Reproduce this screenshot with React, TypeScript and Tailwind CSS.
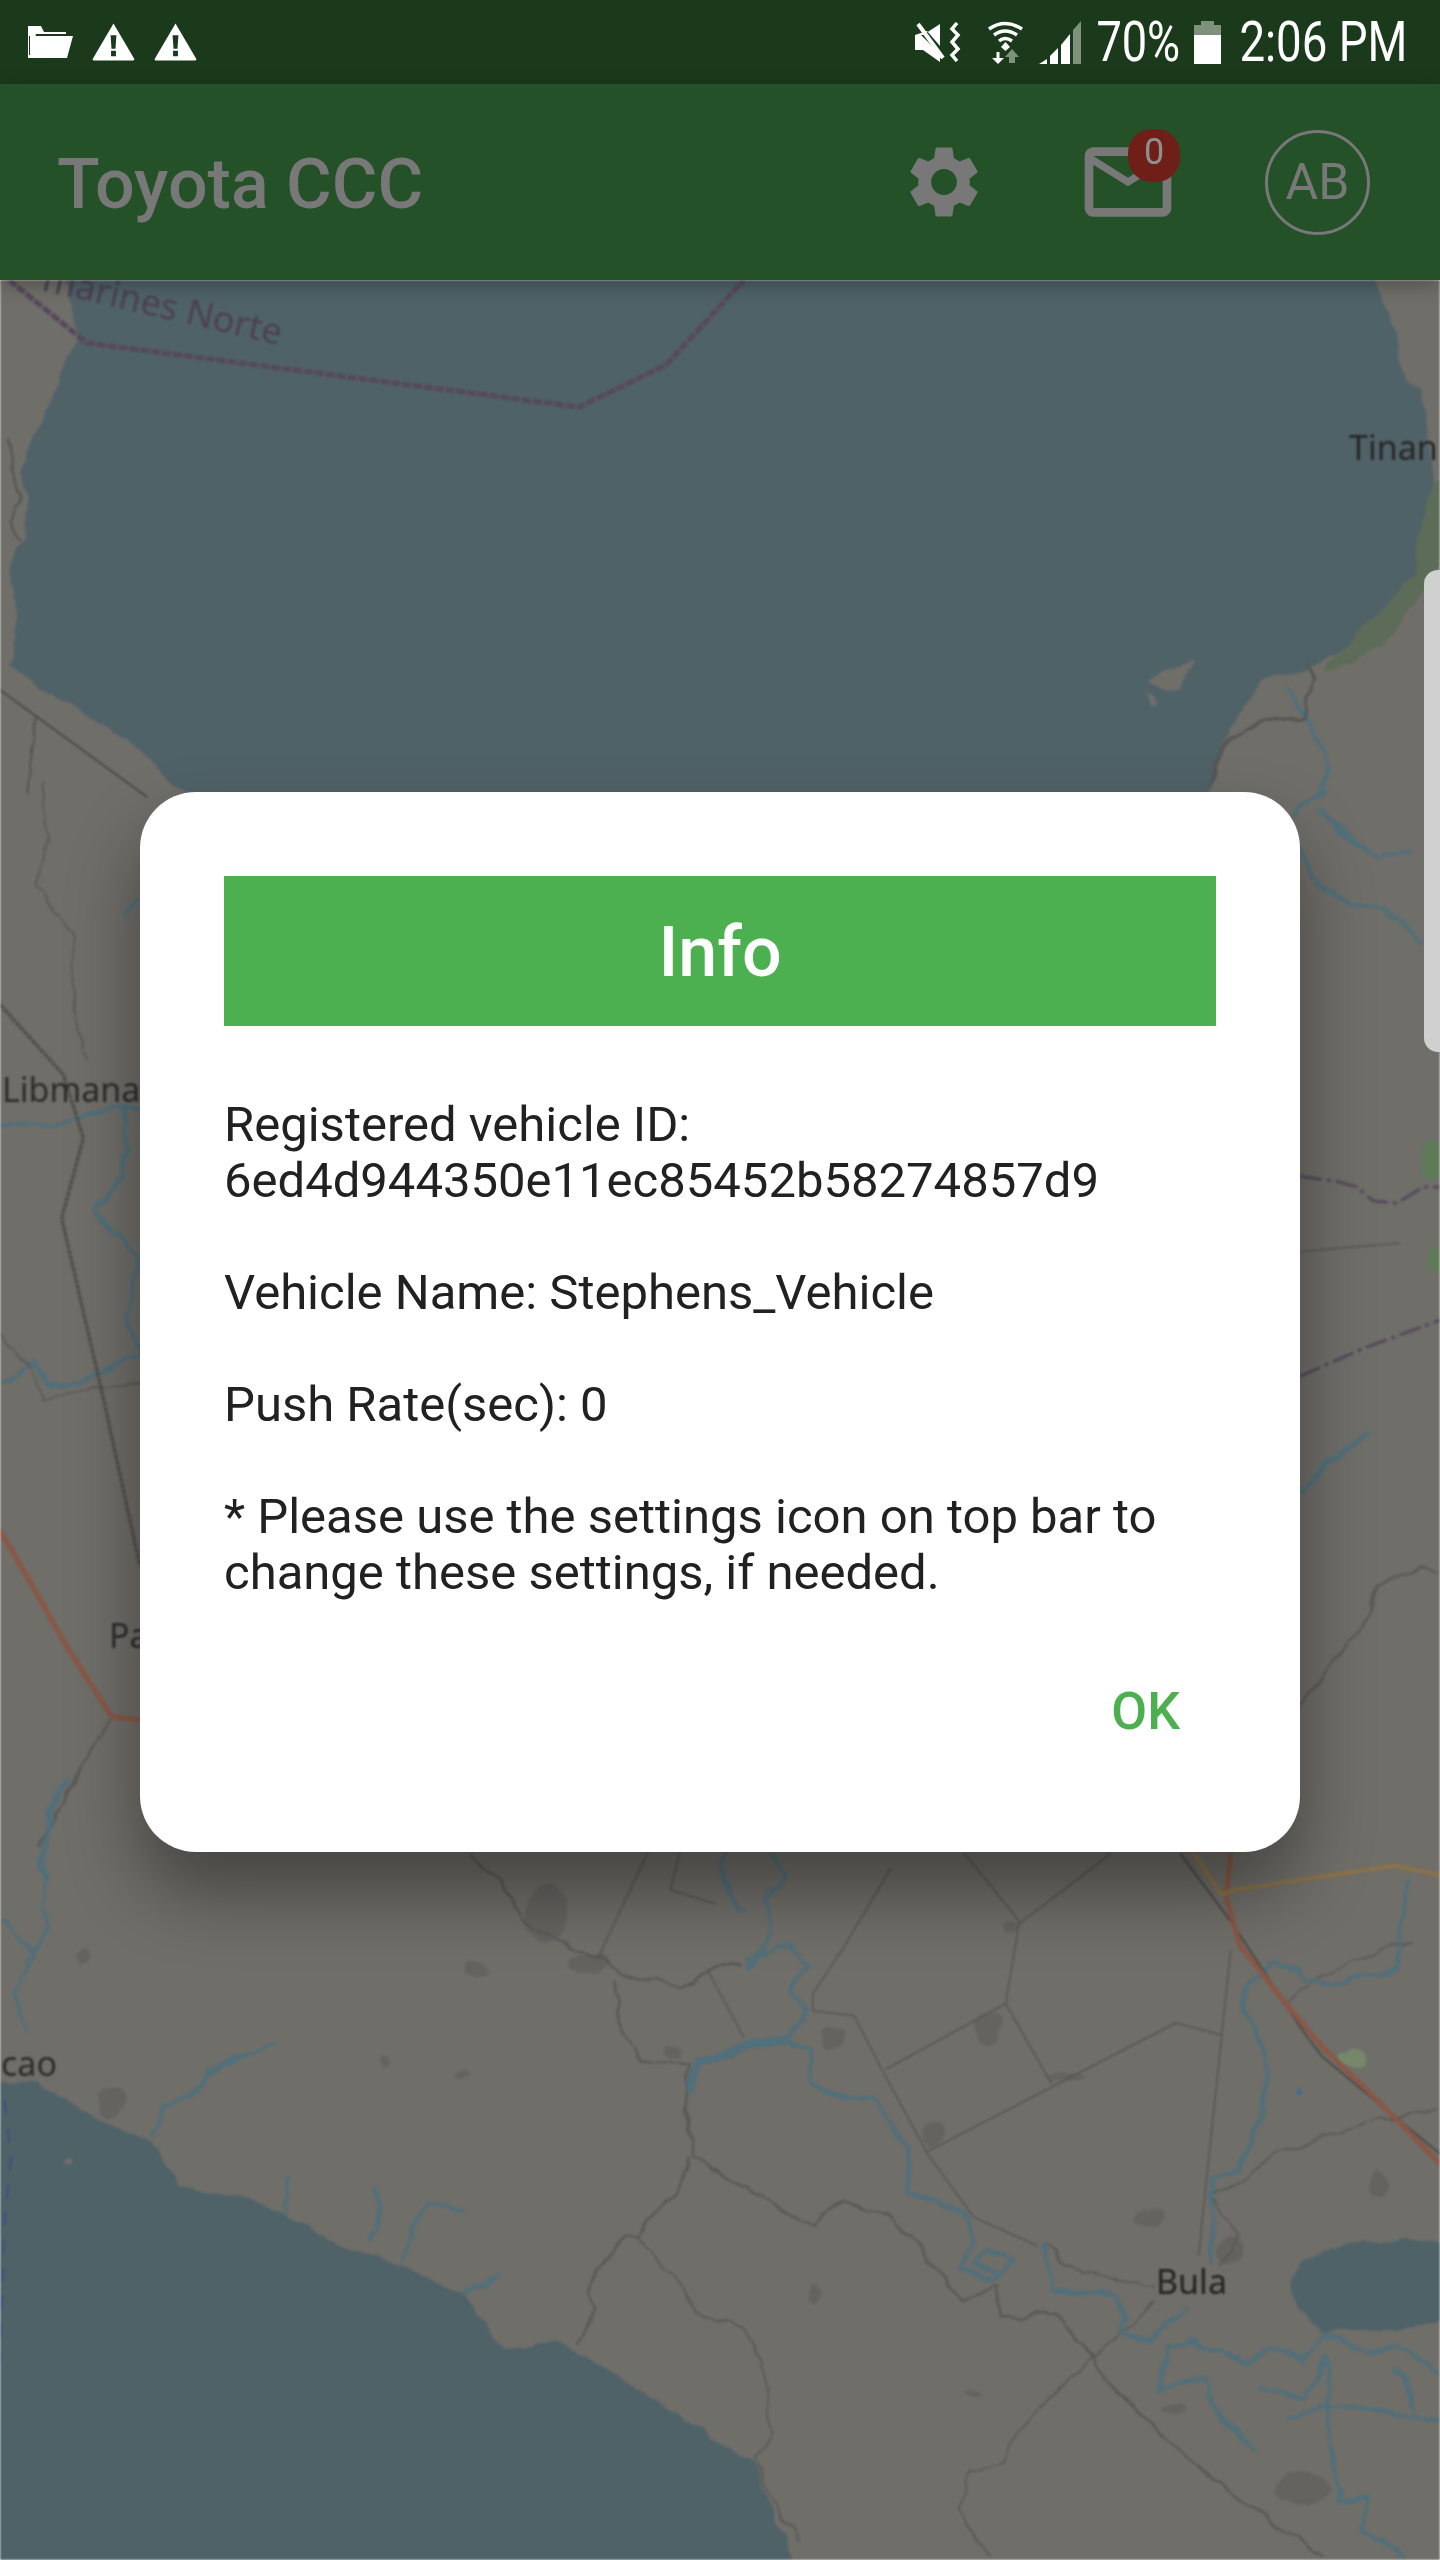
import { MdMailOutline, MdSettings } from "react-icons/md";

// fixed routes stay straight, the rest go through the wobble filter
type Route = { d: string; color: string; w: number; dash?: string; fixed?: boolean };

const ROAD = "#4b4b49";
const THIN = "#555553";
const RIVER = "#4f707c";
const RED = "#8b5744";
const ORANGE = "#8c7248";
const PURPLE = "#57485a";

// top bay and the area around it, in page coordinates
const bayRoutes: Route[] = [
  { d: "M9,280 L87,343 L579,407 L666,365 L744,280", color: PURPLE, w: 5, dash: "9 2", fixed: true },
  { d: "M0,690 L147,797", color: ROAD, w: 2, fixed: true },
  { d: "M37,717 L28,792", color: THIN, w: 2 },
  { d: "M9,437 L18,497 L9,517 L22,540", color: THIN, w: 2 },
  { d: "M1286,687 L1304,713 L1332,770 L1313,800", color: RIVER, w: 4 },
  { d: "M1304,663 L1313,680 L1304,717 L1258,722 L1230,737 L1208,780", color: THIN, w: 3 },
];

// left strip next to the dialog, numbers are crop coordinates
const leftRoutes: Route[] = [
  { d: "M0,320 L190,420 L250,510 L185,625 L300,860 L420,1120", color: ROAD, w: 3, dash: "5 1", fixed: true },
  { d: "M0,1070 L50,1110 L200,1235 L335,1335 L420,1340", color: RED, w: 5, fixed: true },
  { d: "M0,495 L190,490 L250,480 L330,465 L420,470", color: RIVER, w: 4 },
  { d: "M375,470 L370,560 L290,615 L330,640 L410,680 L375,760 L420,820", color: RIVER, w: 4 },
  { d: "M0,860 L100,830 L150,860 L200,860 L290,850 L420,820", color: RIVER, w: 4 },
  { d: "M130,1568 L150,1470 L210,1420", color: RIVER, w: 4 },
  { d: "M380,195 L420,165", color: RIVER, w: 4 },
  { d: "M0,790 L90,835 L130,880 L420,855", color: THIN, w: 1.5 },
  { d: "M130,0 L150,90 L105,150 L215,220 L215,310 L260,400", color: THIN, w: 1.5 },
  { d: "M335,1335 L215,1430 L120,1520", color: THIN, w: 2 },
];

// right strip next to the dialog, crop coordinates
const rightRoutes: Route[] = [
  { d: "M0,50 L100,15 M90,40 L210,95 L270,110 L360,100", color: RIVER, w: 4 },
  { d: "M20,90 L60,140 L110,155 L190,175 L280,180 L400,235", color: RIVER, w: 4 },
  { d: "M30,565 L140,572 L200,580 L250,600 L320,603 L400,580 L450,580", color: PURPLE, w: 3, dash: "22 5 4 5", fixed: true },
  { d: "M30,850 L220,810 L450,770", color: PURPLE, w: 3, dash: "22 5 4 5", fixed: true },
  { d: "M30,672 L330,660", color: THIN, w: 1.5, fixed: true },
  { d: "M30,1020 L100,980 L240,930", color: RIVER, w: 5 },
  { d: "M30,1320 L210,1210 L260,1150 L390,1120 L450,1130", color: THIN, w: 2 },
];

// everything below the dialog, crop coordinates
const bottomRoutes: Route[] = [
  { d: "M510,110 L560,210 L570,250 L640,320 L680,360 L740,385 L770,350 L810,340", color: THIN, w: 2 },
  { d: "M705,110 L650,330", color: THIN, w: 1.5, fixed: true },
  { d: "M740,110 L730,185 L780,215", color: THIN, w: 1.5, fixed: true },
  { d: "M970,140 L920,300 L885,400 L885,435 L930,445 L960,555 L1010,730 L1060,860 L1130,920", color: THIN, w: 1.5, fixed: true },
  { d: "M1050,110 L1110,250 L1095,420 L965,555 M1210,110 L1110,255 M1095,420 L1145,585", color: THIN, w: 1.5, fixed: true },
  { d: "M1010,725 L1280,460 L1330,485", color: THIN, w: 1.5, fixed: true },
  { d: "M770,350 L810,490", color: THIN, w: 1.5, fixed: true },
  { d: "M670,370 L675,480 L700,540 L750,550 L745,630 L755,740 L830,820 L885,875 L915,825 L970,860 L1000,920 L1045,1030 L1085,1000 L1090,1070 L1150,1060 L1190,1150 L1215,1220 L1300,1370 L1440,1560", color: THIN, w: 2 },
  { d: "M750,740 L740,810 L700,870 L695,905 L680,900 L650,970 L640,1020 L650,1050 L630,1120", color: THIN, w: 2 },
  { d: "M695,905 L745,1010 L755,1060 L810,1090 L830,1150 L840,1310 L820,1360 L830,1400 L870,1530", color: THIN, w: 1.5 },
  { d: "M1135,920 L1180,980 L1260,1005 M1260,1035 L1190,1150 L1110,1300 L1095,1370 L1055,1385 L1045,1470 L1075,1568", color: THIN, w: 1.5 },
  { d: "M1340,310 L1305,940", color: THIN, w: 1.5, fixed: true },
  { d: "M1568,640 L1500,660 L1390,730 L1340,800 L1320,820 L1350,900 L1330,960", color: THIN, w: 1.5 },
  { d: "M1540,290 L1520,300 L1450,350 L1400,420", color: THIN, w: 1.5 },
  { d: "M1285,110 L1340,250 L1420,480 L1440,530 L1510,640 L1568,730", color: ROAD, w: 2, fixed: true },
  { d: "M1340,110 L1335,200 L1350,300 L1400,420 L1440,510 L1500,620 L1568,750", color: RED, w: 5, fixed: true },
  { d: "M1300,110 L1330,195 L1345,185 L1520,135 L1568,155", color: ORANGE, w: 4, fixed: true },
  { d: "M790,110 L785,170 L810,230 M840,110 L855,160 L835,200 L840,270 L815,350", color: RIVER, w: 4 },
  { d: "M815,330 L860,300 L880,340 L860,390 L880,440 L855,490 L880,510 L885,580 L905,610 L950,620 L975,680 L990,720 L990,810 L1050,850 L1060,900 L1045,970 L1080,990 L1105,950 L1075,925 L1060,960 L1085,975", color: RIVER, w: 4 },
  { d: "M1135,920 L1145,1010 L1215,1020 L1225,1060 L1220,1090 L1250,1120 L1290,1050", color: RIVER, w: 4 },
  { d: "M855,490 L800,520 L760,545 L750,600", color: RIVER, w: 7 },
  { d: "M0,250 L30,300 L35,330 L15,400 L30,480 M60,0 L45,130 L50,260 L30,340", color: RIVER, w: 3 },
  { d: "M300,505 L240,540 L210,610 L180,630 L165,700", color: RIVER, w: 4 },
  { d: "M315,780 L310,850 M405,795 L415,840 L405,910 M505,850 L465,835 L445,880 L440,950 M540,975 L530,1000 L505,1025", color: RIVER, w: 4 },
  { d: "M1320,960 L1320,790 L1350,760 L1375,640 L1380,520 L1355,430 L1360,380 L1385,340 L1415,350 L1420,370 L1450,385 L1520,350 L1535,165", color: RIVER, w: 4 },
  { d: "M1265,1215 L1270,1130 L1300,1120 L1360,1165 L1380,1130 L1420,1160 L1445,1100 L1490,1140 L1520,1130 L1568,1180", color: RIVER, w: 4 },
  { d: "M1265,1215 L1310,1190 L1330,1280 L1370,1340 M1370,1220 L1420,1230 L1445,1150 L1445,1280 L1460,1450 L1490,1440 L1480,1500 L1530,1560", color: RIVER, w: 4 },
  { d: "M1400,1280 L1440,1250 L1568,1280 M1520,1170 L1540,1260", color: RIVER, w: 4 },
  { d: "M5,620 L12,740 L5,870 L0,1160", color: "#3f4f80", w: 2, dash: "14 14", fixed: true },
];

// built-up patches, faint grey: cx, cy, rx, ry in bottom crop coordinates
const patches = [
  [595, 235, 22, 60], [1075, 470, 14, 30], [905, 490, 14, 22], [1015, 690, 12, 26], [640, 340, 20, 20],
  [120, 625, 18, 30], [90, 320, 9, 16], [735, 520, 8, 16], [520, 350, 12, 22], [1100, 260, 9, 14],
  [890, 1020, 7, 20], [1160, 570, 24, 10], [1420, 1420, 30, 34], [1340, 930, 14, 26], [1250, 860, 16, 20],
  [420, 540, 5, 16], [505, 565, 10, 8], [1500, 790, 10, 26], [1060, 1220, 8, 8], [1280, 1260, 10, 12],
];

function Routes({ routes, fixed }: { routes: Route[]; fixed: boolean }) {
  return (
    <>
      {routes
        .filter((r) => !!r.fixed === fixed)
        .map((r, i) => (
          <path
            key={i}
            d={r.d}
            fill="none"
            stroke={r.color}
            strokeWidth={r.w}
            strokeDasharray={r.dash}
            strokeLinejoin="round"
            vectorEffect="non-scaling-stroke"
          />
        ))}
    </>
  );
}

function RouteLayers({ fixed }: { fixed: boolean }) {
  return (
    <>
      <Routes routes={bayRoutes} fixed={fixed} />
      <g transform="translate(0 780) scale(0.3333 0.7016)">
        <Routes routes={leftRoutes} fixed={fixed} />
      </g>
      <g transform="translate(1290 780) scale(0.3333 0.7016)">
        <Routes routes={rightRoutes} fixed={fixed} />
      </g>
      <g transform="translate(0 1800) scale(0.9184 0.4847)">
        <Routes routes={bottomRoutes} fixed={fixed} />
      </g>
    </>
  );
}

function MapLayer() {
  return (
    <svg viewBox="0 280 1440 2280" className="absolute inset-0 h-full w-full blur-[1px]">
      <defs>
        <filter id="wobble" x="-20" y="260" width="1480" height="2320" filterUnits="userSpaceOnUse">
          <feTurbulence type="fractalNoise" baseFrequency="0.035" numOctaves="2" seed="4" />
          <feDisplacementMap in="SourceGraphic" scale="14" xChannelSelector="R" yChannelSelector="G" />
        </filter>
      </defs>
      <rect x="0" y="280" width="1440" height="2280" fill="#6f6e69" />
      <g filter="url(#wobble)">
        {/* bay */}
        <path
          d="M60,260 L78,343 L64,367 L41,427 L28,443 L23,480 L28,533 L9,567 L18,613 L9,667 L55,697 L110,730 L197,800 L1203,800 L1230,727 L1262,680 L1300,672 L1359,640 L1405,597 L1419,563 L1433,480 L1423,390 L1405,380 L1396,330 L1368,260 Z"
          fill="#4f6268"
        />
        <path d="M1148,680 L1170,672 L1194,663 L1180,688 L1160,690 Z M1143,695 L1152,697 L1158,707 L1150,708 Z" fill="#6f6e69" />
        <path d="M1322,672 L1350,640 L1390,600 L1412,575 L1422,520 L1434,480 L1445,480 L1445,560 L1400,625 L1350,665 Z" fill="#5c6c58" />
        <ellipse cx="1434" cy="1160" rx="14" ry="22" fill="#5f7a58" />
        <ellipse cx="1436" cy="1260" rx="8" ry="14" fill="#5f7a58" />

        <g transform="translate(0 1800) scale(0.9184 0.4847)">
          {patches.map(([cx, cy, rx, ry], i) => (
            <ellipse key={i} cx={cx} cy={cy} rx={rx} ry={ry} fill="#656461" />
          ))}
          <path
            d="M-30,580 L40,585 L100,650 L165,710 L195,790 L300,840 L370,920 L430,950 L510,1030 L550,1140 L600,1115 L660,1170 L740,1270 L820,1370 L880,1620 L-30,1620 Z"
            fill="#4f6268"
          />
          <path
            d="M1405,1000 L1420,950 L1470,915 L1530,905 L1600,935 L1600,1070 L1520,1095 L1440,1095 L1415,1050 Z"
            fill="#4f6268"
          />
          <ellipse cx="1470" cy="535" rx="15" ry="18" fill="#76876a" />
          <ellipse cx="1415" cy="600" rx="3" ry="4" fill="#2f6da0" />
          <ellipse cx="78" cy="740" rx="5" ry="8" fill="#6f6e69" />
        </g>
        <RouteLayers fixed={false} />
      </g>
      <RouteLayers fixed={true} />

      <g className="font-['Noto_Sans',sans-serif]" fontSize="34">
        <text transform="translate(279 345) rotate(13)" textAnchor="end" fontSize="36" fill="#4d4150">
          marines Norte
        </text>
        <text x="1349" y="460" fill="#262626">Tinan</text>
        <text x="2" y="1102" fill="#2b2b2b">Libmana</text>
        <text x="109" y="1648" fill="#2b2b2b">Pa</text>
        <text x="1" y="2076" fill="#2b2b2b">cao</text>
        <text x="1156" y="2294" fill="#222222">Bula</text>
      </g>
    </svg>
  );
}

function FolderIcon() {
  return (
    <svg viewBox="0 0 45 32" className="h-[32px] w-[45px] fill-white">
      <path d="M0,0 L13,0 L16,6 L38,6 L38,8 L8,8 L3,28 L2,28 L2,10 L0,10 Z" />
      <path d="M0,0 L0,32 L39,32 L45,10 L7,10 L2,29 L1,29 L1,0 Z" />
    </svg>
  );
}

function WarningIcon() {
  return (
    <svg viewBox="0 0 44 38" className="h-[38px] w-[43px]">
      <path fillRule="evenodd" className="fill-white" d="M22,0 L43,36 Q44,38 42,38 L2,38 Q0,38 1,36 Z M19,12 L20,26 L24,26 L25,12 Z M19.5,28 L19.5,33.5 L24.5,33.5 L24.5,28 Z" />
    </svg>
  );
}

function MuteVibrateIcon() {
  return (
    <svg viewBox="0 0 46 40" className="h-[40px] w-[46px]">
      <path className="fill-white" d="M0,13 L8,13 L25,2 L25,24 L12,9 Z M0,13 L0,28 L8,28 L25,40 L25,32 L6,13 Z" />
      <path stroke="white" strokeWidth="4" d="M3,2 L28,36" />
      <path stroke="white" strokeWidth="3.5" fill="none" d="M42,1 L37,7 L43,13 L37,20 L43,27 L37,33 L42,39" />
    </svg>
  );
}

function WifiIcon() {
  return (
    <svg viewBox="0 0 37 43" className="h-[43px] w-[37px]">
      <g fill="none" stroke="white" strokeWidth="3.5">
        <path d="M2,8 Q18,-3 35,8" />
        <path d="M7,14 Q18,6 30,14" />
        <path d="M12,20 Q18,15 25,20" />
      </g>
      <path className="fill-white" d="M18.5,21 L23,26 L18.5,30 L14,26 Z" />
      <path stroke="white" strokeWidth="3" d="M11,31 L11,40" />
      <path className="fill-white" d="M5,37 L17,37 L11,43 Z" />
      <path className="fill-[#7d917d]" d="M25,28 L32,36 L28,36 L28,42 L22,42 L22,36 L18,36 Z" />
    </svg>
  );
}

function SignalIcon() {
  return (
    <svg viewBox="0 0 42 43" className="h-[43px] w-[42px]">
      <path className="fill-[#7d917d]" d="M42,0 L42,43 L34,43 L34,9 Z" />
      <path className="fill-white" d="M31,13 L31,43 L22,43 L22,24 Z M19,27 L19,43 L11,43 L11,35 Z M8,38 L8,43 L0,43 Z" />
    </svg>
  );
}

function BatteryIcon() {
  return (
    <div className="flex h-[43px] w-[27px] flex-col items-center">
      <div className="h-[4px] w-[13px] bg-[#7d917d]" />
      <div className="h-[10px] w-full bg-[#7d917d]" />
      <div className="w-full flex-1 bg-white" />
    </div>
  );
}

export default function App() {
  return (
    <div className="relative flex h-[2560px] w-[1440px] flex-col overflow-hidden font-['Roboto',sans-serif]">
      <div className="relative z-10 flex h-[84px] items-center bg-[#1b3a1c] pl-[28px] pr-[36px]">
        <div className="flex items-center gap-[19px]">
          <FolderIcon />
          <WarningIcon />
          <WarningIcon />
        </div>
        <div className="ml-auto flex items-center text-white">
          <MuteVibrateIcon />
          <div className="ml-[26px]">
            <WifiIcon />
          </div>
          <div className="ml-[15px]">
            <SignalIcon />
          </div>
          <div className="flex w-[99px] justify-end text-[55px] leading-none">
            <span className="origin-right scale-x-[0.82] whitespace-nowrap">70%</span>
          </div>
          <div className="ml-[14px]">
            <BatteryIcon />
          </div>
          <div className="-mr-[3px] flex w-[186px] justify-end text-[55px] leading-none">
            <span className="origin-right scale-x-[0.83] whitespace-nowrap">2:06 PM</span>
          </div>
        </div>
      </div>

      <div className="relative z-10 flex h-[196px] items-center bg-[#245127] pl-[57px] shadow-[0_4px_18px_rgba(0,0,0,0.3)]">
        <span className="pt-[4px] text-[70px] font-medium text-[#787878]">Toyota CCC</span>
        <div className="ml-auto flex items-center">
          <MdSettings className="text-[86px] text-[#787878]" />
          <div className="relative ml-[89px] h-[104px] w-[104px]">
            <MdMailOutline className="text-[104px] text-[#787878]" />
            <div className="absolute left-[52px] top-[-1px] flex h-[53px] w-[52px] items-center justify-center rounded-[24px] bg-[#6f1f17] pb-[8px] text-[36px] text-[#8f8f8f]">
              0
            </div>
          </div>
          <div className="ml-[85px] mr-[70px] flex h-[105px] w-[105px] items-center justify-center rounded-full border-[3px] border-[#787878] text-[50px] text-[#787878]">
            AB
          </div>
        </div>
      </div>

      <div className="relative flex-1">
        <MapLayer />
        <div className="absolute right-0 top-[290px] h-[482px] w-[16px] rounded-l-[14px] bg-[#d0d0d0]" />
      </div>

      <div className="absolute left-[140px] top-[792px] z-20 flex h-[1060px] w-[1160px] flex-col rounded-[56px] bg-white px-[84px] pt-[84px] shadow-[0_40px_70px_rgba(0,0,0,0.38)]">
        <div className="flex h-[150px] items-center justify-center bg-[#4caf50] pt-[2px] text-[70px] font-medium text-white">
          Info
        </div>
        <div className="mt-[71px] flex flex-col gap-[56px] text-[49px] leading-[56px] text-[#212121]">
          <p>
            Registered vehicle ID:
            <br />
            6ed4d944350e11ec85452b58274857d9
          </p>
          <p>Vehicle Name: Stephens_Vehicle</p>
          <p>Push Rate(sec): 0</p>
          <p>* Please use the settings icon on top bar to change these settings, if needed.</p>
        </div>
        <div className="mt-[83px] flex justify-end pr-[36px] text-[52px] font-medium leading-[56px] text-[#4caf50]">
          OK
        </div>
      </div>
    </div>
  );
}
